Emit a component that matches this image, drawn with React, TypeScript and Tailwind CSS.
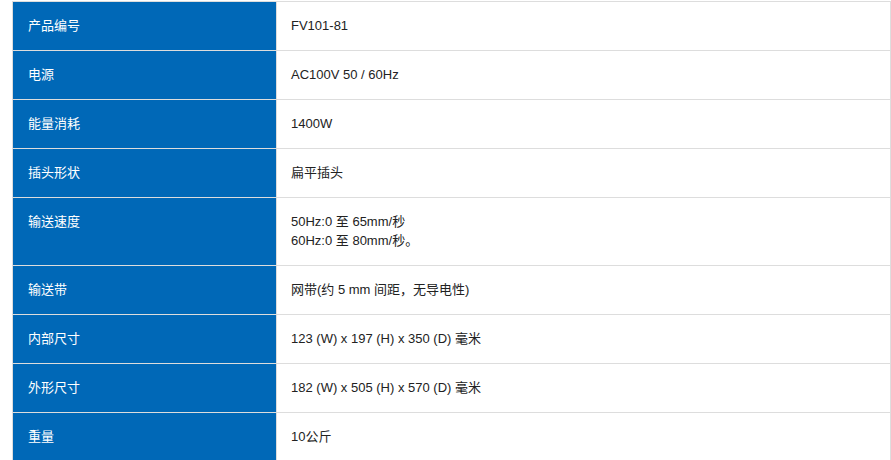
const specs: { label: string; value: string[] }[] = [
  { label: "产品编号", value: ["FV101-81"] },
  { label: "电源", value: ["AC100V 50 / 60Hz"] },
  { label: "能量消耗", value: ["1400W"] },
  { label: "插头形状", value: ["扁平插头"] },
  { label: "输送速度", value: ["50Hz:0 至 65mm/秒", "60Hz:0 至 80mm/秒。"] },
  { label: "输送带", value: ["网带(约 5 mm 间距，无导电性)"] },
  { label: "内部尺寸", value: ["123 (W) x 197 (H) x 350 (D) 毫米"] },
  { label: "外形尺寸", value: ["182 (W) x 505 (H) x 570 (D) 毫米"] },
  { label: "重量", value: ["10公斤"] },
];

const App = () => {
  return (
    <div className="w-[891px] h-[460px] overflow-hidden bg-white pt-[1px] pl-[12px] font-['Liberation_Sans','Noto_Sans_CJK_SC',sans-serif] text-[13px] leading-[19px]">
      <table className="w-[879px] border-collapse">
        <tbody>
          {specs.map((row) => (
            <tr key={row.label} className="border border-[#dddddd]">
              <th className="w-[264px] bg-[#0068b7] pl-[15px] pt-[14px] pb-[15px] text-left align-top font-normal text-white border border-[#dddddd]">
                {row.label}
              </th>
              <td className="pl-[14px] pt-[14px] pb-[15px] align-top text-[#222222] border border-[#dddddd]">
                {row.value.map((line) => (
                  <div key={line}>{line}</div>
                ))}
              </td>
            </tr>
          ))}
        </tbody>
      </table>
    </div>
  );
};

export default App;
